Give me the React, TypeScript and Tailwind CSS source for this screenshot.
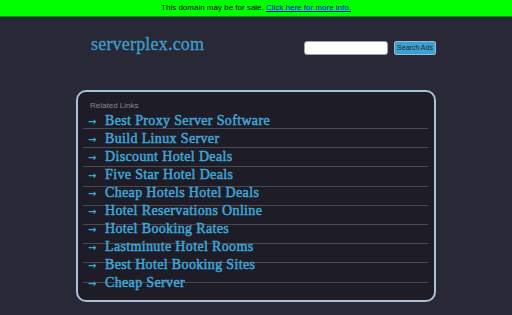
import React from "react";

const links = [
  "Best Proxy Server Software",
  "Build Linux Server",
  "Discount Hotel Deals",
  "Five Star Hotel Deals",
  "Cheap Hotels Hotel Deals",
  "Hotel Reservations Online",
  "Hotel Booking Rates",
  "Lastminute Hotel Rooms",
  "Best Hotel Booking Sites",
  "Cheap Server",
];

export default function App() {
  return (
    <div className="w-[512px] h-[315px] bg-[#292837] overflow-hidden" style={{ fontFamily: "'Liberation Sans', Arial, sans-serif" }}>
      <div className="h-[17px] bg-[#00ff00] border-b border-[#1a8a1a] flex items-center justify-center text-[8px] text-black">
        <span>This domain may be for sale.&nbsp;</span>
        <a href="#" className="text-[#0000ee] underline">Click here for more info.</a>
      </div>
      <div className="flex items-start pl-[91px] pr-[76px] pt-[17px]">
        <div className="text-[18px] text-[#3c9fcc] leading-[20px] tracking-[0.2px]" style={{ fontFamily: "'Liberation Serif', serif", WebkitTextStroke: "0.3px #3c9fcc" }}>
          serverplex.com
        </div>
        <div className="ml-auto mt-[7px] flex items-center gap-[6px]">
          <div className="w-[84px] h-[14px] bg-white rounded-[3px] border border-[#9aa4b0]" />
          <div className="w-[42px] h-[14px] bg-[#3ca0d0] border border-[#9ab8d0] rounded-[2px] text-[7px] text-[#1b2b3b] flex items-center justify-center">Search Ads</div>
        </div>
      </div>
      <div className="mx-[76px] mt-[35px] h-[212px] border-2 border-[#a8c0d8] rounded-[10px] bg-[#1d1c27] pl-[5px] pr-[6px] pt-[9px]">
        <div className="text-[8px] text-[#8a8a95] pl-[7px] leading-[10px]">Related Links</div>
        <div className="grid">
          <div className="col-start-1 row-start-1 flex flex-col">
            {links.slice(0, 9).map((_, i) => (
              <div key={i} className={`${i === 0 ? "h-[18px]" : "h-[19.2px]"} border-b border-[#464b56]`} />
            ))}
          </div>
          <div className="col-start-1 row-start-1 flex flex-col pt-[1px]">
            {links.map((l) => (
              <div key={l} className="h-[18px] flex items-center text-[#3fa6d6]">
                <span className="w-[22px] pl-[5px] text-[10px] font-bold" style={{ fontFamily: "'DejaVu Sans', sans-serif" }}>→</span>
                <span className="text-[14px] leading-[18px] tracking-[0.35px]" style={{ fontFamily: "'Liberation Serif', serif", WebkitTextStroke: "0.5px #3fa6d6" }}>{l}</span>
              </div>
            ))}
          </div>
        </div>
      </div>
    </div>
  );
}
